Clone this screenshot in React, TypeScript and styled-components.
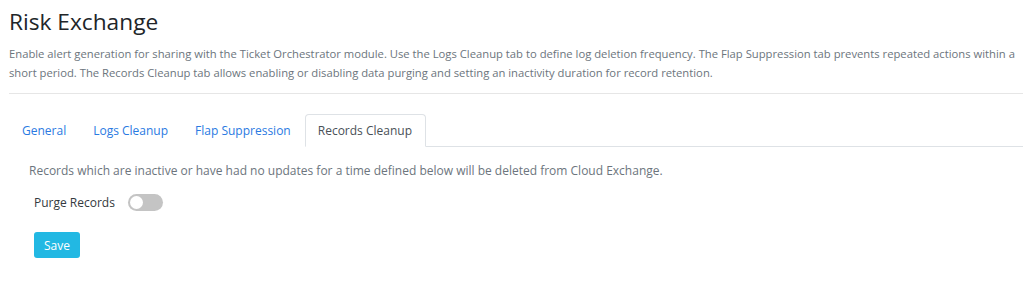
import { useState } from 'react';
import styled, { createGlobalStyle } from 'styled-components';

const GlobalStyle = createGlobalStyle`
  body {
    margin: 0;
    background: #fff;
    font-family: "Open Sans", "Noto Sans", sans-serif;
  }
`;

const Page = styled.div`
  padding: 8px 0 0 9px;
`;

const Title = styled.h1`
  margin: 0;
  font-size: 22.7px;
  font-weight: 400;
  line-height: 28px;
  color: #212529;
`;

const Description = styled.p`
  margin: 8px 0 0;
  font-size: 11.25px;
  line-height: 19px;
  color: #6c757d;
`;

const Divider = styled.hr`
  margin: 11px 1px 20px 0;
  border: 0;
  border-top: 1px solid #e6e6e6;
`;

const TabList = styled.div`
  display: flex;
  margin-right: 1px;
  border-bottom: 1px solid #dee2e6;
`;

const Tab = styled.button<{ $active?: boolean }>`
  padding: 0 13px 0 12px;
  height: 33px;
  margin-bottom: -1px;
  border: 1px solid ${(p) => (p.$active ? '#dee2e6' : 'transparent')};
  border-bottom-color: ${(p) => (p.$active ? '#fff' : 'transparent')};
  border-radius: 4px 4px 0 0;
  background: #fff;
  font-family: inherit;
  font-size: 12px;
  color: ${(p) => (p.$active ? '#495057' : '#2a7ae2')};
  cursor: pointer;
`;

const TabBody = styled.div`
  padding: 15px 0 0 20px;
`;

const Note = styled.p`
  margin: 0;
  font-size: 12px;
  line-height: 17px;
  color: #6c757d;
`;

const Row = styled.div`
  display: flex;
  align-items: center;
  gap: 13px;
  margin: 15px 0 0 5px;
`;

const Label = styled.span`
  font-size: 12px;
  color: #343a40;
`;

const Switch = styled.button<{ $on: boolean }>`
  position: relative;
  width: 35px;
  height: 17px;
  padding: 0;
  border: 0;
  border-radius: 9px;
  background: ${(p) => (p.$on ? '#23b7e5' : '#c4c4c4')};
  cursor: pointer;

  &::after {
    content: '';
    position: absolute;
    top: 2px;
    left: ${(p) => (p.$on ? '20px' : '2px')};
    width: 13px;
    height: 13px;
    border-radius: 50%;
    background: #fff;
  }
`;

const SaveButton = styled.button`
  margin: 21px 0 0 5px;
  height: 26px;
  padding: 0 10px;
  border: 0;
  border-radius: 3px;
  background: #22b8e3;
  color: #fff;
  font-family: inherit;
  font-size: 12px;
  cursor: pointer;
`;

const tabs = ['General', 'Logs Cleanup', 'Flap Suppression', 'Records Cleanup'];

export default function App() {
  const [active, setActive] = useState(3);
  const [purge, setPurge] = useState(false);

  return (
    <Page>
      <GlobalStyle />
      <Title>Risk Exchange</Title>
      <Description>
        Enable alert generation for sharing with the Ticket Orchestrator module. Use the Logs Cleanup tab to define
        log deletion frequency. The Flap Suppression tab prevents repeated actions within a short period. The Records
        Cleanup tab allows enabling or disabling data purging and setting an inactivity duration for record retention.
      </Description>
      <Divider />
      <TabList>
        {tabs.map((t, i) => (
          <Tab key={t} $active={i === active} onClick={() => setActive(i)}>
            {t}
          </Tab>
        ))}
      </TabList>
      <TabBody>
        <Note>
          Records which are inactive or have had no updates for a time defined below will be deleted from Cloud
          Exchange.
        </Note>
        <Row>
          <Label>Purge Records</Label>
          <Switch $on={purge} onClick={() => setPurge(!purge)} />
        </Row>
        <SaveButton>Save</SaveButton>
      </TabBody>
    </Page>
  );
}
